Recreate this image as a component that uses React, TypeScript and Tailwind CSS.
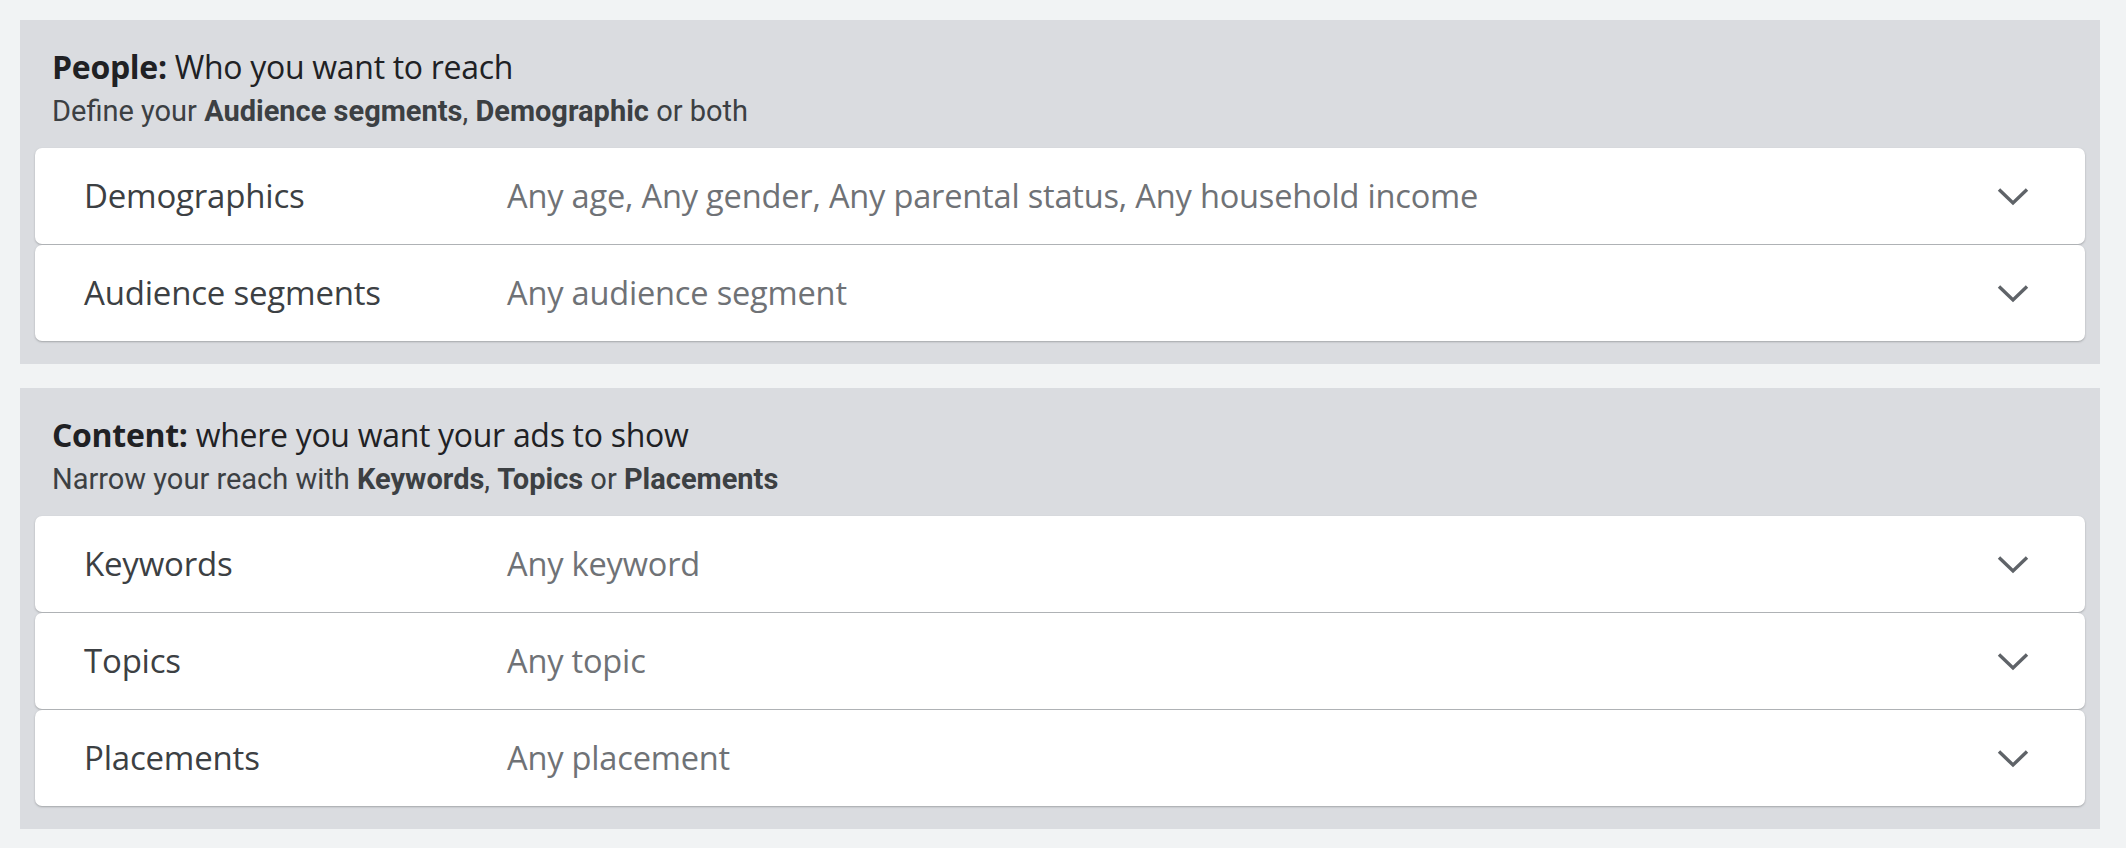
import React from "react";

const Chevron = () => (
  <svg width="32" height="19" viewBox="0 0 32 19" fill="none" className="shrink-0">
    <polyline points="2,2.5 16,16 30,2.5" stroke="#5f6368" strokeWidth="3.4" strokeLinecap="butt" strokeLinejoin="miter" />
  </svg>
);

type Row = { label: string; value: string };

const Card = ({ label, value }: Row) => (
  <div className="flex items-center h-[96px] bg-white rounded-[7px] shadow-[0_1px_2px_rgba(60,64,67,0.35)] pl-[49px] pr-[56px]">
    <div className="w-[423px] shrink-0 text-[33px] text-[#3c4043] font-['Open_Sans',sans-serif] tracking-[-0.2px]">{label}</div>
    <div className="flex-1 text-[32.6px] text-[#6f7276] font-['Open_Sans',sans-serif] tracking-[-0.2px]">{value}</div>
    <Chevron />
  </div>
);

const Panel = ({
  title,
  rest,
  sub,
  rows,
}: {
  title: string;
  rest: string;
  sub: React.ReactNode;
  rows: Row[];
}) => (
  <div className="bg-[#dadce0] px-[15px] pt-[28px] pb-[23px]">
    <div className="pl-[17px]">
      <div className="text-[32px] leading-[38px] text-[#202124] font-['Open_Sans',sans-serif] tracking-[-0.3px]">
        <span className="font-bold">{title}</span> {rest}
      </div>
      <div className="mt-[7px] text-[29px] leading-[36px] text-[#3c4043] font-['Roboto',sans-serif]">{sub}</div>
    </div>
    <div className="mt-[19px] flex flex-col gap-[1px]">
      {rows.map((r) => (
        <Card key={r.label} {...r} />
      ))}
    </div>
  </div>
);

export default function App() {
  return (
    <div className="w-[2126px] h-[848px] bg-[#f1f3f4] pl-[20px] pr-[26px] pt-[20px] flex flex-col gap-[24px]">
      <Panel
        title="People:"
        rest="Who you want to reach"
        sub={
          <>
            Define your <b className="font-bold">Audience segments</b>, <b className="font-bold">Demographic</b> or both
          </>
        }
        rows={[
          { label: "Demographics", value: "Any age, Any gender, Any parental status, Any household income" },
          { label: "Audience segments", value: "Any audience segment" },
        ]}
      />
      <Panel
        title="Content:"
        rest="where you want your ads to show"
        sub={
          <>
            Narrow your reach with <b className="font-bold">Keywords</b>, <b className="font-bold">Topics</b> or <b className="font-bold">Placements</b>
          </>
        }
        rows={[
          { label: "Keywords", value: "Any keyword" },
          { label: "Topics", value: "Any topic" },
          { label: "Placements", value: "Any placement" },
        ]}
      />
    </div>
  );
}
